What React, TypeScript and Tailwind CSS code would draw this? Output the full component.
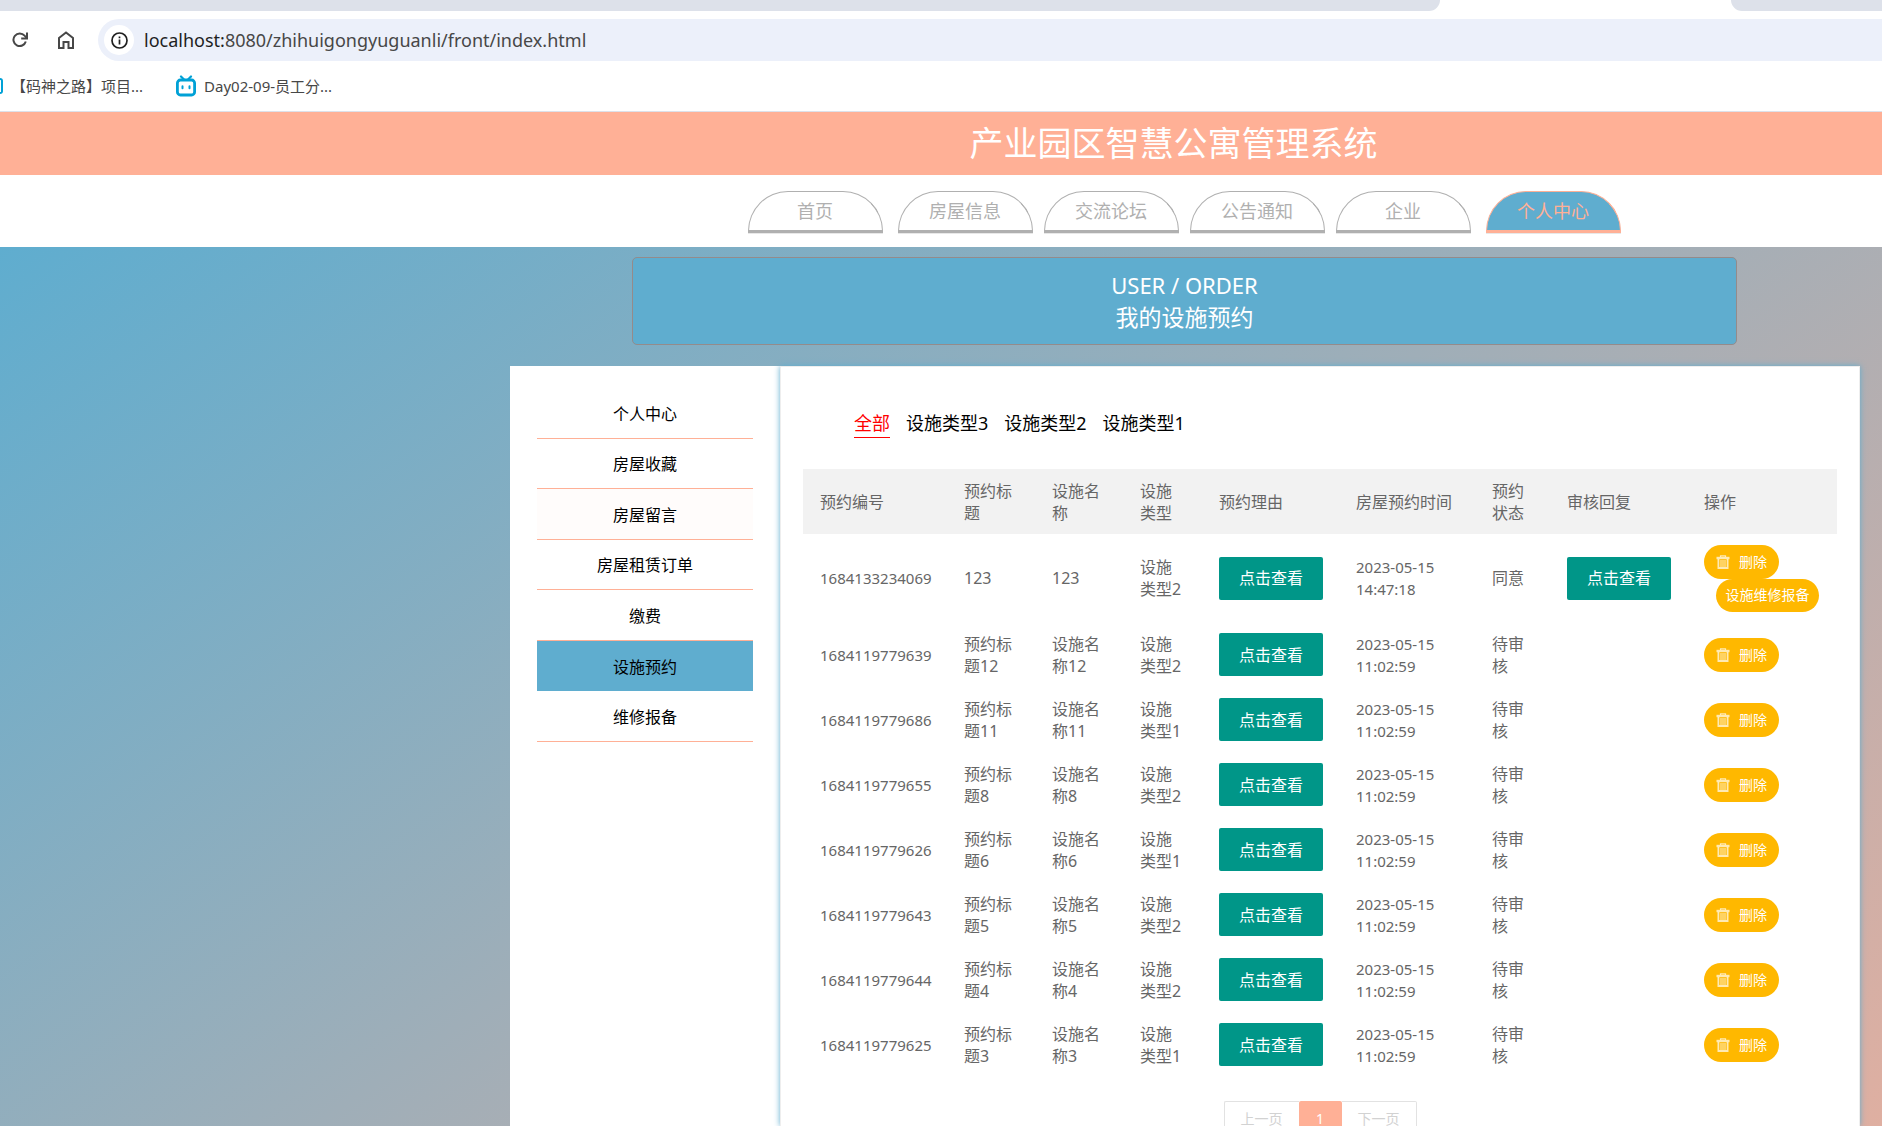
import React, { useState } from 'react';

interface Order {
  id: string;
  title: string;
  name: string;
  type: string;
  time: string;
  status: string;
  replied?: boolean;
}

const NAV_ITEMS = ['首页', '房屋信息', '交流论坛', '公告通知', '企业', '个人中心'];

const MENU_ITEMS = ['个人中心', '房屋收藏', '房屋留言', '房屋租赁订单', '缴费', '设施预约', '维修报备'];

const TYPES = ['全部', '设施类型3', '设施类型2', '设施类型1'];

const COLUMNS = [
  { label: '预约编号', width: 'w-[144px]' },
  { label: '预约标题', width: 'w-[88px]' },
  { label: '设施名称', width: 'w-[88px]' },
  { label: '设施类型', width: 'w-[79px]' },
  { label: '预约理由', width: 'w-[137px]' },
  { label: '房屋预约时间', width: 'w-[136px]' },
  { label: '预约状态', width: 'w-[75px]' },
  { label: '审核回复', width: 'w-[137px]' },
  { label: '操作', width: '' },
];

const ORDERS: Order[] = [
  { id: '1684133234069', title: '123', name: '123', type: '设施类型2', time: '2023-05-15 14:47:18', status: '同意', replied: true },
  { id: '1684119779639', title: '预约标题12', name: '设施名称12', type: '设施类型2', time: '2023-05-15 11:02:59', status: '待审核' },
  { id: '1684119779686', title: '预约标题11', name: '设施名称11', type: '设施类型1', time: '2023-05-15 11:02:59', status: '待审核' },
  { id: '1684119779655', title: '预约标题8', name: '设施名称8', type: '设施类型2', time: '2023-05-15 11:02:59', status: '待审核' },
  { id: '1684119779626', title: '预约标题6', name: '设施名称6', type: '设施类型1', time: '2023-05-15 11:02:59', status: '待审核' },
  { id: '1684119779643', title: '预约标题5', name: '设施名称5', type: '设施类型2', time: '2023-05-15 11:02:59', status: '待审核' },
  { id: '1684119779644', title: '预约标题4', name: '设施名称4', type: '设施类型2', time: '2023-05-15 11:02:59', status: '待审核' },
  { id: '1684119779625', title: '预约标题3', name: '设施名称3', type: '设施类型1', time: '2023-05-15 11:02:59', status: '待审核' },
];

const BiliIcon = () => (
  <svg viewBox="0 0 20 22" className="w-5 h-[22px] shrink-0" fill="none" stroke="#00a1d6" strokeLinecap="round">
    <path d="M5 1.5l3 3M15 1.5l-3 3" strokeWidth="2.2" />
    <rect x="1.4" y="5" width="17.2" height="15" rx="3" strokeWidth="2.8" />
    <path d="M6.5 11.2v2M13.5 11.2v2" strokeWidth="2" />
  </svg>
);

const TrashIcon = () => (
  <svg viewBox="0 0 14 14" className="size-[14px] shrink-0" fill="none" stroke="#fff" strokeOpacity="0.7">
    <path d="M0.5 3h13" strokeWidth="2.4" />
    <path d="M4.5 2V0.8h5V2" strokeWidth="1.2" />
    <path d="M2.4 4v9h9.2V4" strokeWidth="1.8" />
    <path d="M5 5v7M7 5v7M9 5v7" strokeWidth="1.1" />
  </svg>
);

const BrowserChrome = () => (
  <div className="bg-white border-b border-[#dde1ea]">
    <div className="flex justify-between h-[11px]">
      <div className="w-[1440px] bg-[#dde1ea] rounded-br-[14px]" />
      <div className="w-[151px] bg-[#dde1ea] rounded-bl-[14px]" />
    </div>
    <div className="flex items-center mt-2 h-[42px]">
      <button type="button" aria-label="重新加载" className="ml-3 text-[#474747]">
        <svg viewBox="0 0 16 16" className="size-4" fill="none" stroke="currentColor" strokeWidth="2">
          <path d="M13.8 9.5A6.3 6.3 0 1 1 12.6 3.7L14.5 5.8" />
          <path d="M15 0.5v6H9.2" />
        </svg>
      </button>
      <button type="button" aria-label="主页" className="ml-[30px] text-[#474747]">
        <svg viewBox="0 0 16 18" className="w-4 h-[18px]" fill="none" stroke="currentColor" strokeWidth="2">
          <path d="M1 7L8 1.5L15 7v10h-4.5v-6h-5v6H1z" />
        </svg>
      </button>
      <div className="ml-6 flex-1 flex items-center h-full pl-[6px] rounded-l-full bg-[#ecf0fa]">
        <span className="size-[30px] rounded-full bg-white flex items-center justify-center">
          <svg viewBox="0 0 17 17" className="size-[17px]" fill="none" stroke="#1f1f1f" strokeWidth="1.7">
            <circle cx="8.5" cy="8.5" r="7.5" />
            <path d="M8.5 7.5v5M8.5 4.4v1.8" />
          </svg>
        </span>
        <span className="ml-[10px] text-[18px] text-[#474747]">
          <span className="text-[#1f1f1f]">localhost:</span>8080/zhihuigongyuguanli/front/index.html
        </span>
      </div>
    </div>
    <div className="flex items-center h-[50px] text-[15px] text-[#474747]">
      <div className="w-[3px] h-4 border-2 border-l-0 border-[#00a1d6] rounded-r-sm" />
      <a href="#" className="ml-2">【码神之路】项目...</a>
      <a href="#" className="ml-[33px] flex items-center gap-2">
        <BiliIcon />
        Day02-09-员工分...
      </a>
    </div>
  </div>
);

const ViewButton = () => (
  <button type="button" className="block w-[104px] h-[43px] rounded-[2px] bg-[#009688] text-white text-[16px]">
    点击查看
  </button>
);

const OrderRow = ({ order }: { order: Order }) => (
  <tr className={order.replied ? 'h-[88px]' : 'h-[65px]'}>
    <td className="px-[17px] text-[15px]">{order.id}</td>
    <td className="px-[17px]">{order.title}</td>
    <td className="px-[17px]">{order.name}</td>
    <td className="px-[17px]">{order.type}</td>
    <td className="px-[17px]"><ViewButton /></td>
    <td className="px-[17px] text-[15px]">{order.time}</td>
    <td className="px-[17px]">{order.status}</td>
    <td className="px-[17px]">{order.replied && <ViewButton />}</td>
    <td className="pl-[17px]">
      <button
        type="button"
        className="flex items-center justify-center gap-[9px] w-[75px] h-[34px] rounded-full bg-[#ffb800] text-white text-[14px]"
      >
        <TrashIcon />
        删除
      </button>
      {order.replied && (
        <button type="button" className="block ml-3 w-[103px] h-[33px] rounded-full bg-[#ffb800] text-white text-[14px]">
          设施维修报备
        </button>
      )}
    </td>
  </tr>
);

const App = () => {
  const [activeType, setActiveType] = useState('全部');

  return (
    <div className="h-screen overflow-hidden flex flex-col bg-white font-['Noto_Sans','Noto_Sans_CJK_SC',sans-serif]">
      <BrowserChrome />

      <header className="bg-[#ffb096] h-[63px] pl-[465px] flex items-center justify-center shrink-0">
        <h1 className="text-[34px] leading-[63px] text-white">产业园区智慧公寓管理系统</h1>
      </header>

      <nav className="bg-white h-[72px] pl-[486px] pt-4 flex justify-center gap-[11px] shrink-0">
        {NAV_ITEMS.map(item => (
          <a
            key={item}
            href="#"
            className={`w-[135px] h-[42px] flex items-center justify-center rounded-t-[40px] border border-b-[3px] shadow-[0_1px_0_#e8e8e8] text-[18px] first:mr-1 last:ml-1 ${
              item === '个人中心'
                ? 'bg-[#5fadcf] border-[#ffb096] text-[#ffb096]'
                : 'bg-white border-[#b0b0b0] text-[#b0b0b0]'
            }`}
          >
            {item}
          </a>
        ))}
      </nav>

      <div className="flex-1 min-h-0 flex flex-col bg-[linear-gradient(145deg,#5fadcf,#dfafa1)]">
        <div className="mt-[10px] ml-[632px] mr-[145px] h-[88px] shrink-0 flex flex-col items-center justify-center rounded-[5px] border border-[#948b8b] bg-[#5fadcf] text-white leading-8">
          <div className="text-[22px]">USER / ORDER</div>
          <h2 className="text-[23px]">我的设施预约</h2>
        </div>

        <div className="flex-1 min-h-0 mt-[21px] pl-[510px] pr-[22px] flex items-stretch">
          <aside className="w-[270px] shrink-0 px-[27px] pt-[22px] bg-white">
            <ul className="grid auto-rows-fr h-[354px] text-[16px] text-black">
              {MENU_ITEMS.map(item => (
                <li key={item} className="flex">
                  <a
                    href="#"
                    className={`flex-1 flex items-center justify-center pt-[2px] border-b ${
                      item === '设施预约'
                        ? 'bg-[#5fadcf] border-[#5fadcf]'
                        : item === '房屋留言'
                          ? 'bg-[#fffcfb] border-[#ffb096]'
                          : 'border-[#ffb096]'
                    }`}
                  >
                    {item}
                  </a>
                </li>
              ))}
            </ul>
          </aside>

          <main className="flex-1 min-w-0 px-[22px] bg-white border border-b-0 border-[#eeeeee] shadow-[0_0_6px_#5fadcf]">
            <div className="pl-[51px] pt-[42px] h-[102px] flex items-start gap-4 text-[18px] text-black">
              {TYPES.map(type => (
                <button
                  key={type}
                  type="button"
                  onClick={() => setActiveType(type)}
                  className={`h-[29px] border-b ${type === activeType ? 'text-[#ff0000] border-[#ff0000]' : 'border-transparent'}`}
                >
                  {type}
                </button>
              ))}
            </div>

            <table className="w-full table-fixed text-left text-[16px] leading-[22px] text-[#666]">
              <thead>
                <tr className="h-[65px] bg-[#f2f2f2]">
                  {COLUMNS.map(col => (
                    <th key={col.label} className={`px-[17px] font-normal ${col.width}`}>{col.label}</th>
                  ))}
                </tr>
              </thead>
              <tbody>
                {ORDERS.map(order => (
                  <OrderRow key={order.id} order={order} />
                ))}
              </tbody>
            </table>

            <div className="mt-6 flex justify-center text-[14px] text-[#d2d2d2]">
              <button type="button" className="w-[75px] h-[34px] border border-r-0 border-[#e2e2e2] rounded-l-[2px]">上一页</button>
              <button type="button" className="w-[43px] h-[34px] bg-[#ffb096] text-white rounded-[2px]">1</button>
              <button type="button" className="w-[75px] h-[34px] border border-l-0 border-[#e2e2e2] rounded-r-[2px]">下一页</button>
            </div>
          </main>
        </div>
      </div>
    </div>
  );
};

export default App;
